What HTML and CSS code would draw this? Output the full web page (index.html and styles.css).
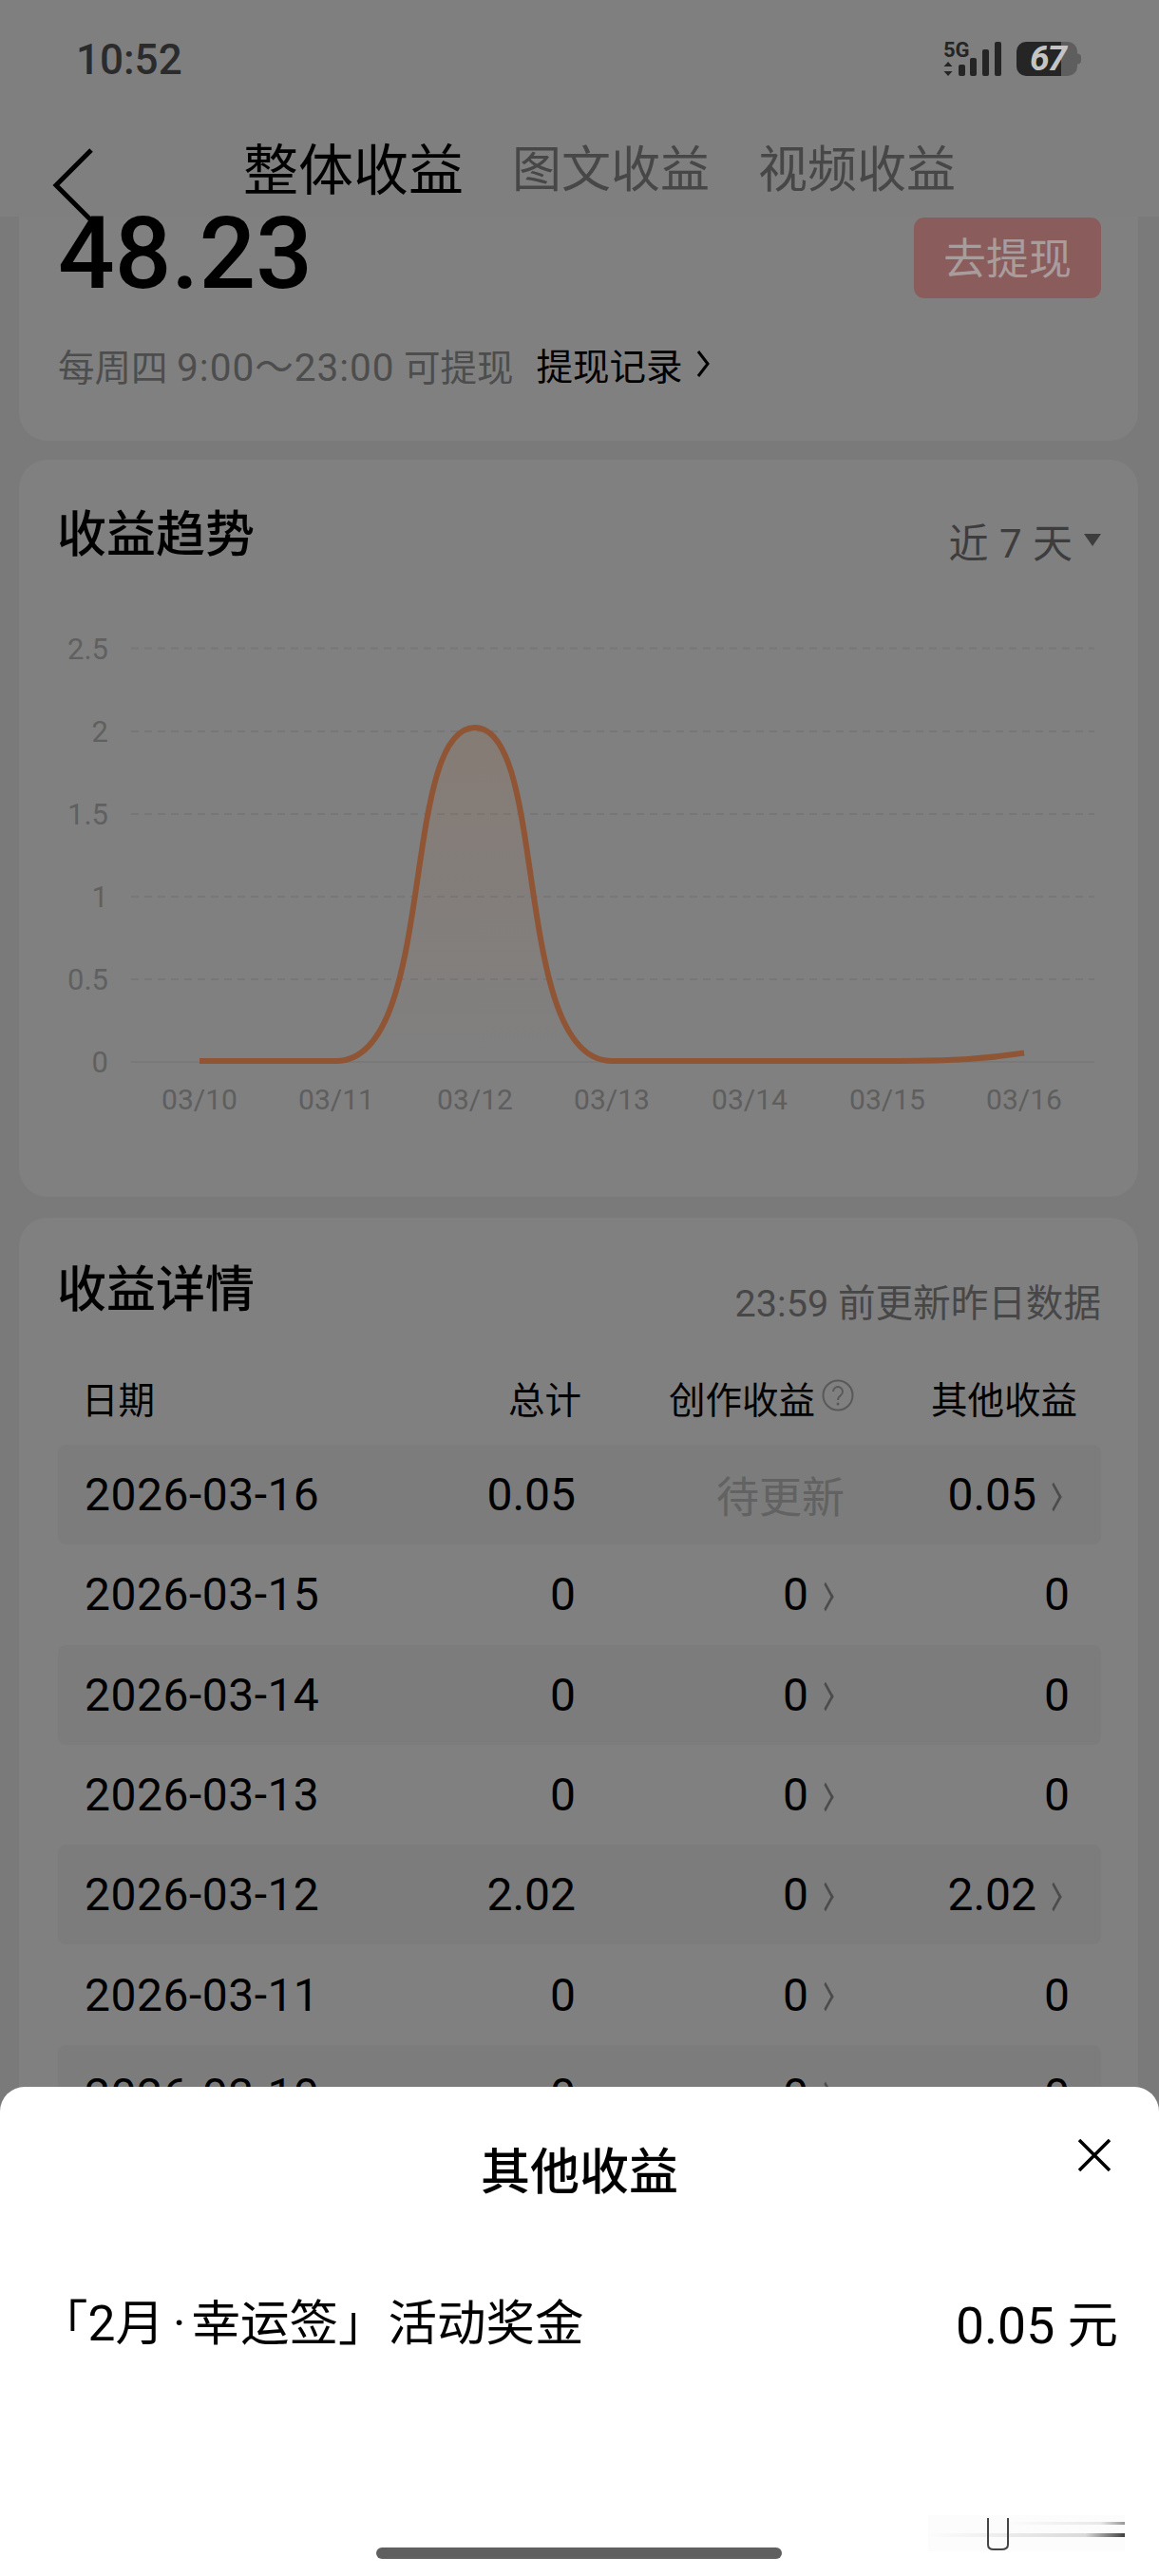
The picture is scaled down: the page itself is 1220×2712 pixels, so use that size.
FILE: index.html
```html
<!DOCTYPE html>
<html lang="zh-CN">
<head>
<meta charset="utf-8">
<title>整体收益</title>
<link rel="stylesheet" href="styles.css">
</head>
<body>
<div class="page">
  <header class="top">
    <div class="status">
      <span class="time">10:52</span>
      <svg class="status-icons" viewBox="0 0 150 44" width="150" height="44">
        <text class="net" x="1" y="19">5G</text>
        <path class="ink" d="M6 24l4.500 5h-9zM6 39l4.500-5h-9z"/>
        <rect class="ink" x="17" y="27" width="7" height="12" rx="2"/>
        <rect class="ink" x="29" y="20" width="7" height="19" rx="2"/>
        <rect class="ink" x="42" y="11" width="7" height="28" rx="2"/>
        <rect class="ink" x="55" y="3" width="7" height="36" rx="2"/>
        <path class="batt-rest" d="M110 3h22a10 10 0 0 1 10 10v2.500a4 4 0 0 1 4 4v3a4 4 0 0 1-4 4v2.500a10 10 0 0 1-10 10h-22z"/>
        <path class="ink" d="M88 3h37v36h-37a10 10 0 0 1-10-10v-16a10 10 0 0 1 10-10z"/>
        <text class="batt-num" x="92" y="33">67</text>
      </svg>
    </div>
    <nav class="tabs">
      <span class="tab tab-on">整体收益</span>
      <span class="tab">图文收益</span>
      <span class="tab">视频收益</span>
    </nav>
  </header>

  <svg class="back" viewBox="0 0 48 84" width="48" height="84"><path d="M44 4L7 41l37 37" /></svg>

  <main class="content">
    <section class="card card-balance">
      <div class="balance-row">
        <span class="amount">48.23</span>
        <span class="withdraw">去提现</span>
      </div>
      <div class="meta">
        <span class="meta-note">每周四 <span class="meta-time">9:00～23:00</span> 可提现</span>
        <span class="meta-link">提现记录</span>
        <svg class="meta-chev" viewBox="0 0 16 30" width="16" height="30"><path d="M3 2l10 13L3 28"/></svg>
      </div>
    </section>

    <section class="card card-trend">
      <div class="card-head">
        <h2 class="card-title">收益趋势</h2>
        <span class="range">近 7 天<i class="range-caret"></i></span>
      </div>
      <svg class="chart" viewBox="20 640 1178 560" width="1178" height="560">
        <defs>
          <linearGradient id="area" x1="0" y1="0" x2="0" y2="1">
            <stop offset="0" stop-color="#a5653c" stop-opacity=".16"/>
            <stop offset="1" stop-color="#a5653c" stop-opacity="0"/>
          </linearGradient>
        </defs>
        <g class="grid">
          <path d="M138 682.500H1152"/><path d="M138 770H1152"/><path d="M138 857H1152"/>
          <path d="M138 944H1152"/><path d="M138 1031H1152"/>
        </g>
        <path class="axis" d="M138 1118H1152"/>
        <g class="ylabels">
          <text x="114" y="694">2.5</text><text x="114" y="781">2</text><text x="114" y="868">1.5</text>
          <text x="114" y="955">1</text><text x="114" y="1042">0.5</text><text x="114" y="1129">0</text>
        </g>
        <g class="xlabels">
          <text x="210" y="1168">03/10</text><text x="354" y="1168">03/11</text><text x="500" y="1168">03/12</text>
          <text x="644" y="1168">03/13</text><text x="789" y="1168">03/14</text><text x="934" y="1168">03/15</text>
          <text x="1078" y="1168">03/16</text>
        </g>
        <path fill="url(#area)" d="M354 1117C461 1117 420 766 500 766C578 766 538 1117 644 1117Z"/>
        <path class="line" d="M210 1117H354C461 1117 420 766 500 766C578 766 538 1117 644 1117H934C990 1117 1030 1116 1078 1108.500"/>
      </svg>
    </section>

    <section class="card card-detail">
      <div class="card-head detail-head">
        <h2 class="card-title">收益详情</h2>
        <span class="note">23:59 前更新昨日数据</span>
      </div>
      <div class="thead">
        <span>日期</span>
        <span class="r">总计</span>
        <span class="r">创作收益<svg class="help" viewBox="0 0 34 34" width="34" height="34"><circle cx="17" cy="17" r="15.500"/><path d="M12 13a5 5 0 1 1 8 4c-2 1.500-3 2.500-3 5"/><circle class="dot" cx="17" cy="26" r="1.500"/></svg></span>
        <span class="r">其他收益</span>
      </div>
      <div class="tr tint"><span class="date">2026-03-16</span><span class="r">0.05</span><span class="r pending">待更新</span><span class="r">0.05<i class="chev"></i></span></div>
      <div class="tr"><span class="date">2026-03-15</span><span class="r">0</span><span class="r">0<i class="chev"></i></span><span class="r">0</span></div>
      <div class="tr tint"><span class="date">2026-03-14</span><span class="r">0</span><span class="r">0<i class="chev"></i></span><span class="r">0</span></div>
      <div class="tr"><span class="date">2026-03-13</span><span class="r">0</span><span class="r">0<i class="chev"></i></span><span class="r">0</span></div>
      <div class="tr tint"><span class="date">2026-03-12</span><span class="r">2.02</span><span class="r">0<i class="chev"></i></span><span class="r">2.02<i class="chev"></i></span></div>
      <div class="tr"><span class="date">2026-03-11</span><span class="r">0</span><span class="r">0<i class="chev"></i></span><span class="r">0</span></div>
      <div class="tr tint"><span class="date">2026-03-10</span><span class="r">0</span><span class="r">0<i class="chev"></i></span><span class="r">0</span></div>
    </section>
  </main>

  <aside class="sheet">
    <h3 class="sheet-title">其他收益</h3>
    <svg class="close" viewBox="0 0 36 36" width="36" height="36"><path d="M2 2l32 32M34 2L2 34"/></svg>
    <div class="sheet-row">
      <span>「<span class="sheet-two">2月</span><span class="sheet-dot">·</span>幸运签」<span class="sheet-end">活动奖金</span></span>
      <span class="sheet-val">0.05 元</span>
    </div>
    <div class="mark">
      <svg viewBox="0 0 210 50" width="210" height="50">
        <defs>
          <linearGradient id="fade" x1="0" y1="0" x2="1" y2="0">
            <stop offset="0" stop-color="#000" stop-opacity="0"/>
            <stop offset=".3" stop-color="#000" stop-opacity=".05"/>
            <stop offset=".8" stop-color="#000" stop-opacity=".14"/>
            <stop offset="1" stop-color="#000" stop-opacity=".75"/>
          </linearGradient>
          <linearGradient id="fade2" x1="0" y1="0" x2="1" y2="0">
            <stop offset="0" stop-color="#000" stop-opacity="0"/>
            <stop offset=".8" stop-color="#000" stop-opacity=".08"/>
            <stop offset="1" stop-color="#000" stop-opacity=".4"/>
          </linearGradient>
        </defs>
        <rect class="mark-haze" x="0" y="0" width="207" height="38"/>
        <rect x="80" y="7" width="127" height="3" fill="url(#fade2)"/>
        <rect x="0" y="19" width="207" height="4" fill="url(#fade)"/>
        <path class="mark-u" d="M63 3V31q0 5 6 5h8q7 0 7-5V3"/>
      </svg>
    </div>
    <div class="home-bar"></div>
  </aside>
</div>
</body>
</html>
```
FILE: styles.css
```css
* { box-sizing: border-box; }
html, body { margin: 0; padding: 0; }
body {
  font-family: Roboto, "Noto Sans CJK SC", sans-serif;
  color: #000;
  background: #7a7a7a;
}
.page {
  position: relative;
  width: 1220px;
  height: 2712px;
  overflow: hidden;
  background: #7a7a7a;
}
.top { height: 228px; background: #7f7f7f; }
.status {
  height: 126px;
  padding: 0 78px 0 80px;
  display: flex;
  justify-content: space-between;
  align-items: center;
}
.time { font-size: 44px; font-weight: 500; color: #2b2b2b; }
.status-icons { display: block; }
.ink { fill: #252525; }
.net { font: 700 22px Roboto, sans-serif; fill: #252525; }
.batt-rest { fill: #5e5e5e; }
.batt-num { font: italic 700 37px Roboto, sans-serif; fill: #c4c4c4; letter-spacing: -2px; }
.tabs {
  height: 102px;
  padding: 5px 0 0 256px;
  display: flex;
  align-items: center;
  gap: 51px;
}
.tab { font-size: 52px; line-height: 1; color: #474747; }
.tab-on { font-size: 58px; color: #000; }
.back {
  position: absolute;
  left: 52px;
  top: 154px;
  z-index: 2;
}
.back path { fill: none; stroke: #000; stroke-width: 5; }
.content {
  padding: 0 22px 0 20px;
  display: flex;
  flex-direction: column;
  gap: 20px;
}
.card { background: #808080; border-radius: 30px; padding: 0 39px 0 41px; }
.card-balance { height: 236px; border-radius: 0 0 30px 30px; }
.balance-row {
  display: flex;
  justify-content: space-between;
  align-items: flex-start;
}
.amount { font-size: 105px; font-weight: 500; line-height: 80px; }
.withdraw {
  width: 197px;
  height: 85px;
  margin-top: 1px;
  border-radius: 11px;
  background: #8a5c5c;
  color: #a99c9c;
  font-size: 45px;
  line-height: 90px;
  display: flex;
  align-items: flex-start;
  justify-content: center;
}
.meta {
  height: 50px;
  margin-top: 44px;
  display: flex;
  align-items: center;
  font-size: 38.500px;
}
.meta-note { color: #4d4d4d; }
.meta-time { font-size: 40.500px; letter-spacing: 1px; }
.meta-link { margin-left: 24px; }
.meta-chev { margin-left: 13px; }
.meta-chev path { fill: none; stroke: #000; stroke-width: 3; }
.card-trend { height: 776px; padding: 52px 0 0; }
.card-head {
  padding: 0 39px 0 41px;
  display: flex;
  justify-content: space-between;
  align-items: center;
}
.card-trend .card-head { height: 50px; }
.card-title { margin: 0 0 0 -1px; font-size: 52px; font-weight: 500; line-height: 50px; padding-top: 6px; }
.range {
  font-size: 42px;
  color: #3d3d3d;
  margin-top: 14px;
  display: flex;
  align-items: center;
  word-spacing: 1px;
}
.range-caret {
  margin-left: 12px;
  width: 0;
  height: 0;
  border-left: 9px solid transparent;
  border-right: 9px solid transparent;
  border-top: 13px solid #3d3d3d;
}
.chart { display: block; margin-top: 54px; }
.grid path { stroke: #777; stroke-width: 2; stroke-dasharray: 8 6; fill: none; }
.axis { stroke: #797979; stroke-width: 2; fill: none; }
.ylabels text { font-size: 31px; fill: #606060; text-anchor: end; }
.xlabels text { font-size: 30px; fill: #5e5e5e; text-anchor: middle; }
.line { fill: none; stroke: #8f5535; stroke-width: 6; }
.card-detail {
  padding: 53px 0 0;
  height: 1000px;
  margin-top: 2px;
}
.detail-head { height: 48px; align-items: flex-start; }
.detail-head .card-title { padding-top: 0; margin-top: -1px; }
.note {
  margin-top: 18px;
  font-size: 39.600px;
  line-height: 40px;
  color: #474747;
}
.thead, .tr {
  display: grid;
  margin: 0 39px 0 41px;
  align-items: center;
}
.thead {
  grid-template-columns: 253px 273px 287px 235px;
  height: 50px;
  margin-top: 60px;
  padding-left: 25px;
  font-size: 38.500px;
}
.thead span { display: flex; align-items: center; }
.r { display: flex; justify-content: flex-end; align-items: center; }
.help { margin-left: 7px; margin-top: -4px; flex: none; }
.help circle { fill: none; stroke: #595959; stroke-width: 2; }
.help path { fill: none; stroke: #595959; stroke-width: 2; }
.help .dot { fill: #595959; stroke: none; }
.tr {
  grid-template-columns: 250px 267px 280px 240px;
  height: 105.300px;
  padding-left: 28px;
  font-size: 48px;
  border-radius: 8px;
}
.date { letter-spacing: .5px; }
.thead + .tr { margin-top: 28px; }
.tint { background: #7b7c7b; }
.pending { color: #626262; font-size: 45px; margin-right: -3px; }
.chev {
  width: 13px;
  height: 28px;
  margin: 0 10px 0 12px;
  flex: none;
  position: relative;
}
.chev::before {
  content: "";
  position: absolute;
  left: -5px;
  top: 5px;
  width: 18px;
  height: 18px;
  border-top: 4px solid #4c4c4c;
  border-right: 4px solid #4c4c4c;
  transform: scaleX(.55) rotate(45deg);
}
.sheet {
  position: absolute;
  left: 0;
  right: 0;
  bottom: 0;
  height: 515px;
  background: #fff;
  border-radius: 26px 26px 0 0;
  z-index: 3;
  padding: 0 43px 0 41px;
}
.sheet-title {
  margin: 0 -43px 0 -41px;
  padding-top: 61px;
  font-size: 52px;
  font-weight: 500;
  line-height: 60px;
  text-align: center;
}
.close {
  position: absolute;
  left: 1134px;
  top: 54px;
}
.close path { fill: none; stroke: #000; stroke-width: 3.500; }
.sheet-row {
  margin-top: 97px;
  display: flex;
  justify-content: space-between;
  align-items: center;
  font-size: 51.500px;
  line-height: 60px;
}
.sheet-two { margin-right: 3px; }
.sheet-dot { margin: 0 6px; }
.sheet-end { margin-left: 1px; }
.sheet-val { font-size: 53.500px; padding-top: 4px; }
.mark { position: absolute; left: 977px; top: 451px; }
.mark svg { display: block; }
.mark-haze { fill: #000; opacity: .01; }
.mark-u { fill: none; stroke: #444; stroke-width: 2; }
.home-bar {
  position: absolute;
  left: 396px;
  top: 485px;
  width: 427px;
  height: 12px;
  border-radius: 6px;
  background: #5f5f5f;
}
```
